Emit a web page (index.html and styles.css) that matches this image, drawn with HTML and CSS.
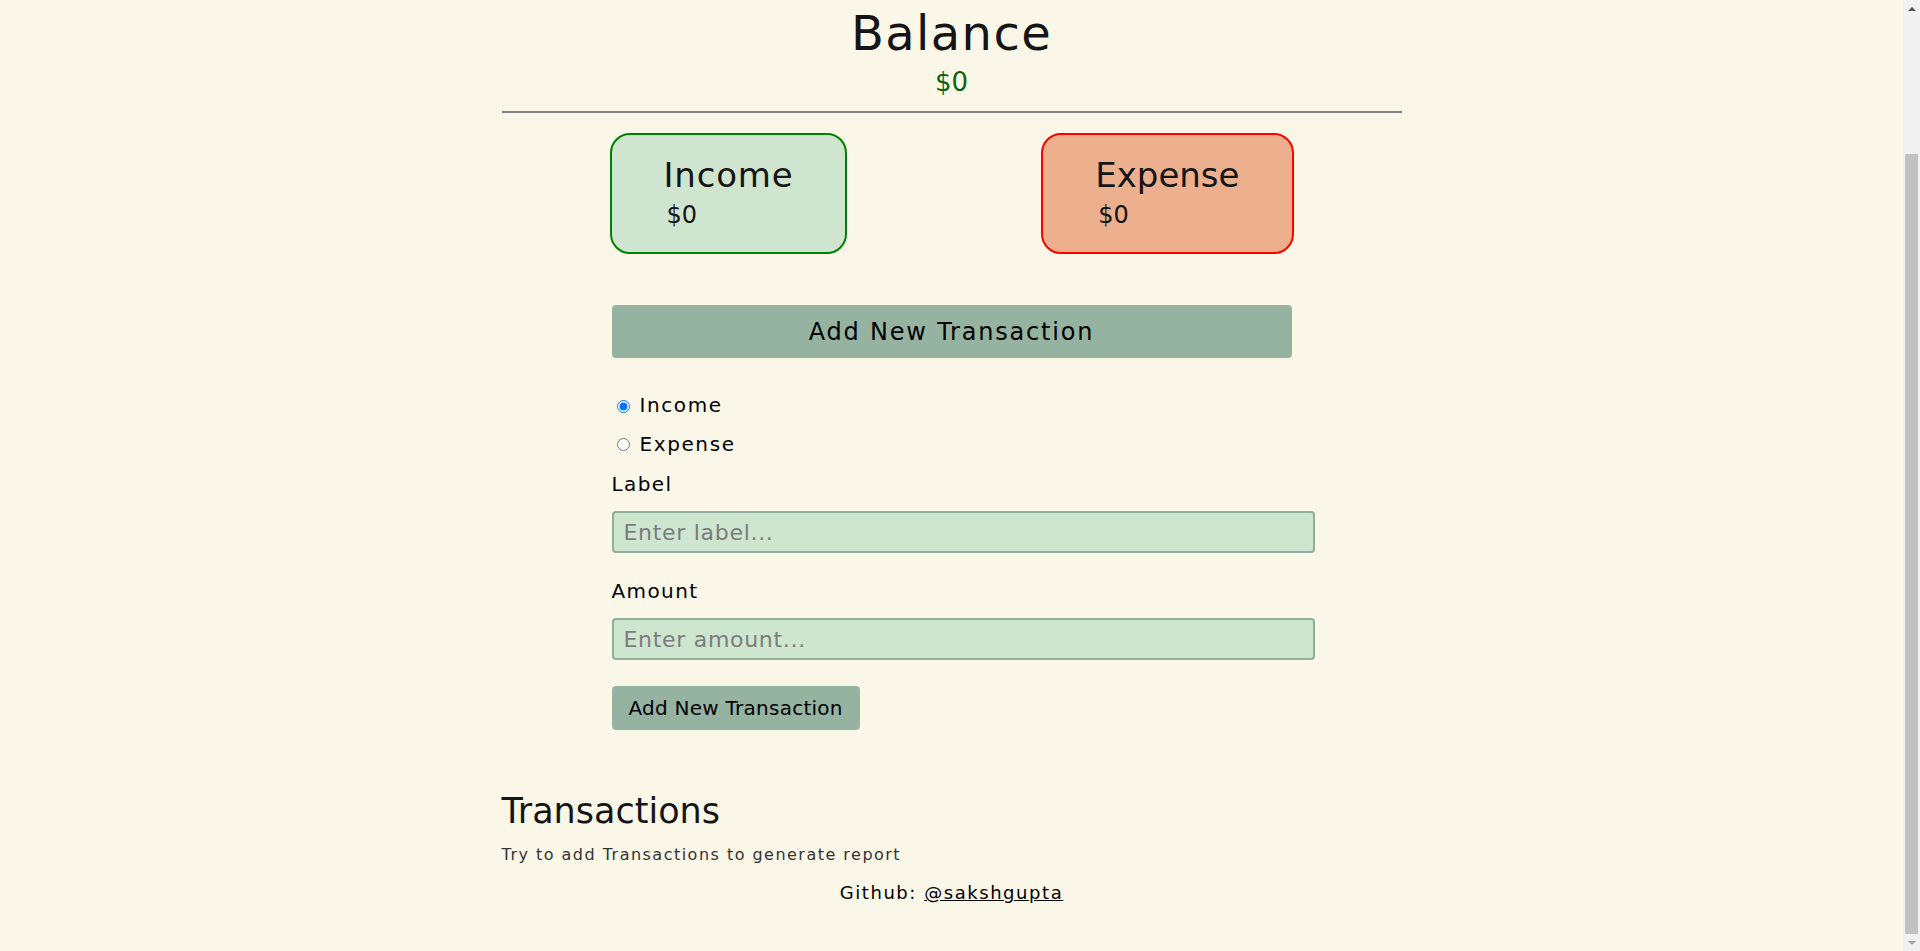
FILE: index.html
```html
<!DOCTYPE html>
<html lang="en">
<head>
<meta charset="utf-8">
<title>Expense Tracker</title>
<link rel="stylesheet" href="styles.css">
</head>
<body>
<div class="app">
  <h1 class="balance-title">Balance</h1>
  <div class="balance-amount">$0</div>
  <hr class="divider">
  <div class="summary">
    <div class="card card-income">
      <div class="card-title">Income</div>
      <div class="card-amount">$0</div>
    </div>
    <div class="card card-expense">
      <div class="card-title">Expense</div>
      <div class="card-amount">$0</div>
    </div>
  </div>
  <div class="form-wrap">
    <button class="toggle-btn" type="button">Add New Transaction</button>
    <form class="tx-form">
      <div class="radio-row">
        <input class="radio" type="radio" id="type-income" name="type" checked>
        <label class="radio-label" for="type-income">Income</label>
      </div>
      <div class="radio-row">
        <input class="radio" type="radio" id="type-expense" name="type">
        <label class="radio-label" for="type-expense">Expense</label>
      </div>
      <label class="field-label" for="f-label">Label</label>
      <input class="field-input" id="f-label" type="text" placeholder="Enter label...">
      <label class="field-label" for="f-amount">Amount</label>
      <input class="field-input" id="f-amount" type="text" placeholder="Enter amount...">
      <button class="submit-btn" type="button">Add New Transaction</button>
    </form>
  </div>
  <h2 class="tx-title">Transactions</h2>
  <p class="tx-empty">Try to add Transactions to generate report</p>
  <footer class="footer">Github: <a class="footer-link" href="#">@sakshgupta</a></footer>
</div>
<div class="scrollbar" aria-hidden="true">
  <div class="sb-btn"><span class="sb-arrow sb-up"></span></div>
  <div class="sb-track"><div class="sb-thumb"></div></div>
  <div class="sb-btn"><span class="sb-arrow sb-down"></span></div>
</div>
</body>
</html>
```

FILE: styles.css
```css
html, body {
  margin: 0;
  padding: 0;
}

body {
  background: #fbf7e8;
  color: #111;
  font-family: "DejaVu Sans", "Liberation Sans", sans-serif;
  padding-right: 17px;
  overflow: hidden;
}

.app {
  width: 900px;
  margin: 0 auto;
  padding: 0 0 49px;
}

.balance-title {
  margin: 5px 0 0;
  font-size: 48px;
  line-height: 56px;
  font-weight: normal;
  letter-spacing: 1.4px;
  text-align: center;
  color: #151515;
}

.balance-amount {
  margin-top: 6px;
  font-size: 26px;
  line-height: 30px;
  text-align: center;
  color: #0a630a;
}

.divider {
  margin: 14px 0 0;
  border: 0;
  height: 2px;
  background: #858585;
}

.summary {
  width: 700px;
  margin: 20px auto 0;
  display: flex;
  justify-content: space-between;
}

.card {
  margin: 0 8px;
  border: 2px solid;
  border-radius: 20px;
  padding: 20px 52px 23px;
}

.card-income {
  background: #cfe5d0;
  border-color: #008000;
}

.card-expense {
  background: #ecb08f;
  border-color: #ff0000;
}

.card-title {
  font-size: 34px;
  line-height: 40px;
  color: #151515;
}

.card-income .card-title {
  letter-spacing: 0.8px;
}

.card-amount {
  margin: 6px 0 0 3px;
  font-size: 24px;
  line-height: 28px;
  color: #151515;
}

.form-wrap {
  width: 680px;
  margin: 51px auto 0;
}

.toggle-btn {
  display: block;
  width: 100%;
  height: 53px;
  border: 0;
  border-radius: 4px;
  background: #95b3a0;
  color: #000;
  font-family: inherit;
  font-size: 24px;
  letter-spacing: 1.8px;
  padding: 0;
}

.tx-form {
  margin-top: 28px;
}

.radio-row {
  height: 38px;
  display: flex;
  align-items: center;
}

.radio-row + .radio-row {
  height: 39px;
}

.radio {
  width: 13px;
  height: 13px;
  margin: 2px 0 0 5px;
}

.radio-label {
  margin-left: 10px;
  font-size: 20px;
  letter-spacing: 1.6px;
  color: #000;
}

.field-label {
  display: block;
  margin-top: 9px;
  font-size: 20px;
  line-height: 24px;
  letter-spacing: 1.4px;
  color: #000;
}

.field-input + .field-label {
  margin-top: 26px;
}

.field-input {
  display: block;
  box-sizing: border-box;
  width: 703px;
  height: 42px;
  margin-top: 15px;
  padding: 0 10px;
  border: 2px solid #91af9c;
  border-radius: 4px;
  background: #cee5d0;
  font-family: inherit;
  font-size: 22px;
  letter-spacing: 0.7px;
  color: #222;
}

.field-input::placeholder {
  color: #7c7c7c;
}

.submit-btn {
  display: block;
  height: 44px;
  margin-top: 26px;
  padding: 0 17px;
  border: 0;
  border-radius: 4px;
  background: #95b3a0;
  color: #000;
  font-family: inherit;
  font-size: 20px;
  letter-spacing: 0.25px;
}

.tx-title {
  margin: 61px 0 0;
  font-size: 35px;
  line-height: 40px;
  font-weight: normal;
  color: #151515;
}

.tx-empty {
  margin: 14px 0 0;
  font-size: 16px;
  line-height: 20px;
  letter-spacing: 1.48px;
  color: #333;
}

.footer {
  margin-top: 17px;
  font-size: 18px;
  line-height: 22px;
  letter-spacing: 1.55px;
  text-align: center;
  color: #000;
}

.footer-link {
  color: #000;
}

/* Browser scrollbar drawn over the page's right edge */
.scrollbar {
  position: fixed;
  top: 0;
  right: 0;
  width: 17px;
  height: 100vh;
  background: #f1f1f1;
  display: flex;
  flex-direction: column;
}

.sb-btn {
  height: 17px;
  display: flex;
  align-items: center;
  justify-content: center;
  flex: none;
}

.sb-arrow {
  width: 0;
  height: 0;
  border-left: 4px solid transparent;
  border-right: 4px solid transparent;
}

.sb-up {
  border-bottom: 4px solid #505050;
}

.sb-down {
  border-top: 4px solid #a3a3a3;
}

.sb-track {
  flex: 1;
  display: flex;
  flex-direction: column;
  justify-content: flex-end;
}

.sb-thumb {
  height: 780px;
  margin: 0 2px;
  background: #c1c1c1;
}
```
